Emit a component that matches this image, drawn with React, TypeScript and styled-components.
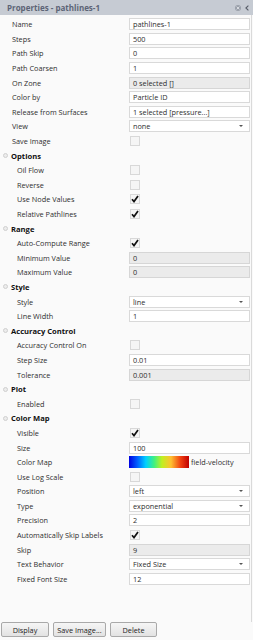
import styled, { createGlobalStyle } from 'styled-components'

type Kind = 'text' | 'disabled' | 'select' | 'check' | 'colormap'

type Field = {
  label: string
  kind: Kind
  value?: string
  checked?: boolean
}

type Section = {
  title?: string
  fields: Field[]
}

const sections: Section[] = [
  {
    fields: [
      { label: 'Name', kind: 'text', value: 'pathlines-1' },
      { label: 'Steps', kind: 'text', value: '500' },
      { label: 'Path Skip', kind: 'text', value: '0' },
      { label: 'Path Coarsen', kind: 'text', value: '1' },
      { label: 'On Zone', kind: 'disabled', value: '0 selected []' },
      { label: 'Color by', kind: 'text', value: 'Particle ID' },
      { label: 'Release from Surfaces', kind: 'text', value: '1 selected [pressure...]' },
      { label: 'View', kind: 'select', value: 'none' },
      { label: 'Save Image', kind: 'check' },
    ],
  },
  {
    title: 'Options',
    fields: [
      { label: 'Oil Flow', kind: 'check' },
      { label: 'Reverse', kind: 'check' },
      { label: 'Use Node Values', kind: 'check', checked: true },
      { label: 'Relative Pathlines', kind: 'check', checked: true },
    ],
  },
  {
    title: 'Range',
    fields: [
      { label: 'Auto-Compute Range', kind: 'check', checked: true },
      { label: 'Minimum Value', kind: 'disabled', value: '0' },
      { label: 'Maximum Value', kind: 'disabled', value: '0' },
    ],
  },
  {
    title: 'Style',
    fields: [
      { label: 'Style', kind: 'select', value: 'line' },
      { label: 'Line Width', kind: 'text', value: '1' },
    ],
  },
  {
    title: 'Accuracy Control',
    fields: [
      { label: 'Accuracy Control On', kind: 'check' },
      { label: 'Step Size', kind: 'text', value: '0.01' },
      { label: 'Tolerance', kind: 'disabled', value: '0.001' },
    ],
  },
  {
    title: 'Plot',
    fields: [{ label: 'Enabled', kind: 'check' }],
  },
  {
    title: 'Color Map',
    fields: [
      { label: 'Visible', kind: 'check', checked: true },
      { label: 'Size', kind: 'text', value: '100' },
      { label: 'Color Map', kind: 'colormap', value: 'field-velocity' },
      { label: 'Use Log Scale', kind: 'check' },
      { label: 'Position', kind: 'select', value: 'left' },
      { label: 'Type', kind: 'select', value: 'exponential' },
      { label: 'Precision', kind: 'text', value: '2' },
      { label: 'Automatically Skip Labels', kind: 'check', checked: true },
      { label: 'Skip', kind: 'disabled', value: '9' },
      { label: 'Text Behavior', kind: 'select', value: 'Fixed Size' },
      { label: 'Fixed Font Size', kind: 'text', value: '12' },
    ],
  },
]

function CheckMark() {
  return (
    <svg width="8" height="8" viewBox="0 0 8 8">
      <path d="M1 4.2 L3 6.6 L7 1" fill="none" stroke="#111" strokeWidth="1.7" />
    </svg>
  )
}

function FieldValue({ field }: { field: Field }) {
  switch (field.kind) {
    case 'check':
      return <CheckBox>{field.checked && <CheckMark />}</CheckBox>
    case 'select':
      return (
        <TextBox>
          {field.value}
          <Caret />
        </TextBox>
      )
    case 'colormap':
      return (
        <ColorMapCell>
          <Gradient />
          <span>{field.value}</span>
        </ColorMapCell>
      )
    default:
      return <TextBox disabled={field.kind === 'disabled'}>{field.value}</TextBox>
  }
}

function App() {
  return (
    <>
      <GlobalStyle />
      <Panel>
        <Header>
          <Title>Properties - pathlines-1</Title>
          <HeaderIcons>
            <svg width="6" height="6" viewBox="0 0 6 6">
              <circle cx="3" cy="3" r="3" fill="#9aa0aa" />
              <path d="M1.6 1.6 L4.4 4.4 M4.4 1.6 L1.6 4.4" stroke="#dfe2e6" strokeWidth="0.9" />
            </svg>
            <svg width="4" height="6" viewBox="0 0 4 6">
              <path d="M3.4 0.6 L0.9 3 L3.4 5.4" fill="none" stroke="#555b66" strokeWidth="1.1" />
            </svg>
          </HeaderIcons>
        </Header>
        <Body>
          {sections.map((section, i) => (
            <div key={i}>
              {section.title && (
                <SectionRow>
                  <Collapse />
                  {section.title}
                </SectionRow>
              )}
              {section.fields.map((field, j) => (
                <Row key={j}>
                  <Label indent={!!section.title}>{field.label}</Label>
                  <FieldValue field={field} />
                </Row>
              ))}
            </div>
          ))}
        </Body>
        <Buttons>
          <Button style={{ width: 48 }}>Display</Button>
          <Button style={{ width: 53 }}>Save Image...</Button>
          <Button style={{ width: 47 }}>Delete</Button>
        </Buttons>
      </Panel>
    </>
  )
}

export default App

const GlobalStyle = createGlobalStyle`
  html, body {
    margin: 0;
    padding: 0;
    background: #fafafa;
  }
  * {
    box-sizing: border-box;
  }
`

const Panel = styled.div`
  width: 253px;
  height: 640px;
  display: flex;
  flex-direction: column;
  font-family: 'Open Sans', 'Noto Sans', sans-serif;
  font-size: 7.3px;
  color: #2e2e2e;
  background: #fafafa;
`

const Header = styled.div`
  height: 15px;
  flex: none;
  display: flex;
  align-items: center;
  justify-content: space-between;
  padding: 0 4px 0 7px;
  background: #c6cbd3;
`

const Title = styled.span`
  font-weight: bold;
  font-size: 8px;
  color: #5d6476;
`

const HeaderIcons = styled.div`
  display: flex;
  align-items: center;
  gap: 4px;
`

const Body = styled.div`
  flex: 1;
  padding-top: 2px;
  border-right: 1px solid #dadada;
  margin-right: 1px;
`

const Row = styled.div`
  height: 14.6px;
  display: grid;
  grid-template-columns: 129px 1fr;
  align-items: center;
  padding-right: 1px;
`

const SectionRow = styled.div`
  height: 14.6px;
  display: flex;
  align-items: center;
  padding-left: 3px;
  gap: 3px;
  font-weight: bold;
  font-size: 7.6px;
  color: #111;
`

const Collapse = styled.span`
  width: 5px;
  height: 5px;
  border-radius: 50%;
  border: 1px solid #cfcfcf;
  background: #ececec;
`

const Label = styled.span<{ indent: boolean }>`
  padding-left: ${({ indent }) => (indent ? '17px' : '12px')};
  white-space: nowrap;
`

const TextBox = styled.div<{ disabled?: boolean }>`
  position: relative;
  height: 12px;
  display: flex;
  align-items: center;
  padding-left: 3px;
  border: 1px solid ${({ disabled }) => (disabled ? '#d6d6d6' : '#d9d9d9')};
  background: ${({ disabled }) => (disabled ? '#ebebeb' : '#fff')};
  white-space: nowrap;
`

const Caret = styled.span`
  position: absolute;
  right: 6px;
  top: 4px;
  border-left: 2.5px solid transparent;
  border-right: 2.5px solid transparent;
  border-top: 2.5px solid #555;
`

const CheckBox = styled.div`
  width: 10px;
  height: 10px;
  margin-left: 1px;
  display: flex;
  align-items: center;
  justify-content: center;
  border: 1px solid #d8d8d8;
  background: #f5f5f5;
`

const ColorMapCell = styled.div`
  display: flex;
  align-items: center;
  gap: 2px;
`

const Gradient = styled.div`
  width: 60px;
  height: 12px;
  background: linear-gradient(
    to right,
    #0000e0 0%,
    #0060ff 14%,
    #00d0ff 28%,
    #40f080 42%,
    #c0f020 55%,
    #ffc030 70%,
    #f04010 86%,
    #c00000 100%
  );
`

const Buttons = styled.div`
  flex: none;
  display: flex;
  gap: 4px;
  padding: 0 0 3px 1px;
`

const Button = styled.button`
  height: 15px;
  padding: 0;
  font-family: 'Open Sans', 'Noto Sans', sans-serif;
  font-size: 7.3px;
  color: #222;
  border: 1px solid #a9a9a9;
  border-radius: 2px;
  background: linear-gradient(#f6f6f6, #e2e2e2);
`
